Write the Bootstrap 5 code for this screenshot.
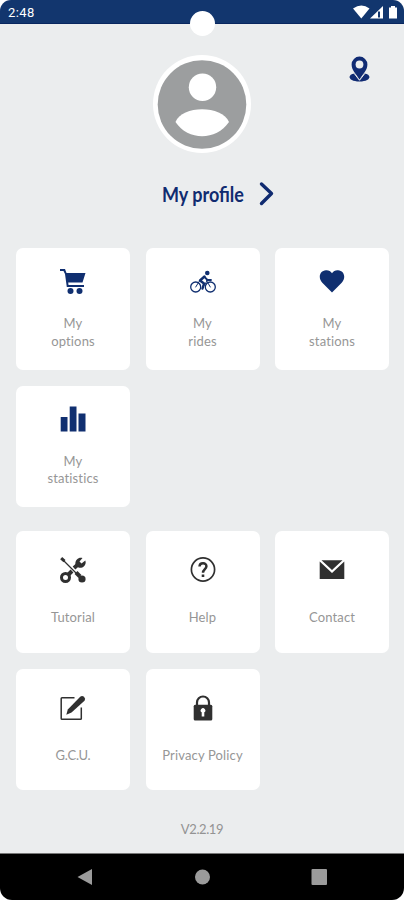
<!DOCTYPE html>
<html lang="en">
<head>
<meta charset="utf-8">
<meta name="viewport" content="width=device-width, initial-scale=1">
<title>My profile</title>
<link href="https://cdn.jsdelivr.net/npm/bootstrap@5.3.0/dist/css/bootstrap.min.css" rel="stylesheet">
<style>
:root{--navy:#12366e;--ink:#303030}
body{font-family:Lato,"Open Sans",sans-serif;background:#fff}
.phone{width:404px;height:900px;background:#ebedee;border-radius:11px 11px 12px 12px}
.status{height:24px;background:var(--navy);border-bottom:1px solid #08265f;padding:0 7px 0 8px}
.clock{font:400 13px/26px Roboto,sans-serif;letter-spacing:.4px}
.camera{width:25px;height:25px;left:190px;top:11px}
.locate{padding:31px 32px 0 0;height:31px;color:#102b73}
.avatar{width:98px;height:98px}
.profile{color:#102b70;height:30px;margin-top:26px;padding-left:32px;gap:14px}
.profile-name{font-size:20px;line-height:28px;font-weight:700;width:83px;white-space:nowrap}
.profile-name span{display:inline-block;transform:scaleX(.9);transform-origin:left}
.tiles{display:grid;grid-template-columns:repeat(3,114px);column-gap:15.5px;row-gap:16px;padding-left:16px}
.tiles.first{margin-top:39px}
.tiles.second{margin-top:24px}
.tile{height:121.5px;background:#fff;border-radius:7px;color:var(--ink);padding-top:26px}
.first .tile{color:#102f70;padding-top:20px}
.tile svg{width:26px;height:26px;flex:none}
.caption{font-size:13px;line-height:17.5px;color:#969696;letter-spacing:.15px;margin-top:26px}
.caption.abbr{letter-spacing:-.2px}
.first .caption{margin-top:21px}
.version{font-size:13px;line-height:18px;color:#939393;letter-spacing:-.4px;margin-top:29.5px}
.softkeys{height:47px;background:#000;border-top:1px solid #777}
</style>
</head>
<body>
<main class="phone position-relative overflow-hidden d-flex flex-column">
  <header class="status d-flex justify-content-between text-white flex-shrink-0">
    <span class="clock">2:48</span>
    <svg width="46" height="23" viewBox="351 0 46 23" fill="#fff"><path d="M353 8.500Q361.500 2.500 369.500 8.500L361.300 18.500Z"/><path d="M370 18.500 383 6V18.500Z"/><path d="M378 11.500h2v6h-2z" fill="#12366e"/><path d="M391 6h4v1.500h2V18.500h-8V7.500h2z"/></svg>
  </header>
  <div class="camera bg-white rounded-circle position-absolute"></div>
  <div class="locate d-flex justify-content-end flex-shrink-0">
    <svg width="24" height="28" viewBox="0 0 24 28" class="flex-shrink-0"><path d="M6.500 18.500C-1 19.500-.5 26.600 11.500 26.600S24 19.500 16.500 18.500L11.500 25Z" fill="currentColor"/><path d="M11.500 24.500C8 19 3.600 15 3.600 9.500a7.900 7.900 0 0 1 15.800 0C19.400 15 15 19 11.500 24.500Z" fill="currentColor"/><circle cx="11.500" cy="9.500" r="3.900" fill="#ebedee"/><path d="M6.200 18.500 11.500 25.300 16.800 18.500" fill="none" stroke="#ebedee"/></svg>
  </div>
  <svg class="avatar align-self-center flex-shrink-0" viewBox="0 0 98 98"><circle cx="49" cy="49" r="49" fill="#fff"/><circle cx="49" cy="49.500" r="44.300" fill="#9c9e9f"/><circle cx="49.500" cy="32.300" r="13.700" fill="#fff"/><path d="M22.500 67C29 50 69 50 76 67 63 86 35 86 22.500 67Z" fill="#fff"/></svg>
  <div class="profile d-flex justify-content-center align-items-center flex-shrink-0">
    <div class="profile-name"><span>My profile</span></div>
    <svg width="16" height="26" viewBox="0 0 16 26" fill="none" stroke="currentColor" stroke-width="3.400" stroke-linecap="round" stroke-linejoin="round"><path d="M2.500 3 12.500 12.500 2.500 22.500"/></svg>
  </div>

  <section class="tiles first">
    <div class="tile d-flex flex-column align-items-center text-center">
      <svg viewBox="0 0 26 26" fill="currentColor"><path d="M0 1H5L6.500 5H25.500L22.500 14.500H8.200L8.500 17H24V19H6.800L5 6 3.500 3H0Z"/><circle cx="10.500" cy="23" r="3"/><circle cx="19.500" cy="23" r="3"/></svg>
      <div class="caption">My<br>options</div>
    </div>
    <div class="tile d-flex flex-column align-items-center text-center">
      <svg viewBox="0 0 26 26" fill="none" stroke="currentColor" stroke-linecap="round" stroke-linejoin="round"><circle cx="5.700" cy="19" r="5" stroke-width="1.300"/><circle cx="20.300" cy="19" r="5" stroke-width="1.300"/><circle cx="17.300" cy="5" r="2.300" fill="currentColor" stroke="none"/><path d="M14.500 8.500 10 12.500 14 15.500 12.500 20.500" stroke-width="2.400"/><path d="M14.500 9 17.500 12H21" stroke-width="1.800"/><path d="M5.700 19 9.500 13M16.500 12.500 20.300 19M12.500 20 17 13" stroke-width="1"/></svg>
      <div class="caption">My<br>rides</div>
    </div>
    <div class="tile d-flex flex-column align-items-center text-center">
      <svg viewBox="0 0 26 26" fill="currentColor"><path d="M13 24.500 3.300 14.800C-1.200 10.200.5 2.500 7 2.200 9.500 2 11.700 3.100 13 5.200 14.300 3.100 16.500 2 19 2.200 25.500 2.500 27.200 10.200 22.700 14.800Z"/></svg>
      <div class="caption">My<br>stations</div>
    </div>
    <div class="tile d-flex flex-column align-items-center text-center">
      <svg viewBox="0 0 26 26" fill="currentColor"><path d="M.7 11H7.500V25.500H.7ZM9.700.5h6.800v25H9.700ZM18.500 7.500h7v18h-7Z"/></svg>
      <div class="caption">My<br>statistics</div>
    </div>
  </section>

  <section class="tiles second">
    <div class="tile d-flex flex-column align-items-center text-center">
      <svg viewBox="0 0 26 26" fill="none" stroke="currentColor"><path d="M1.200 1.200 4.500 4.200" stroke-width="3"/><path d="M4 4 17 17" stroke-width="1.200"/><path d="M16 15.500 20 19.500" stroke-width="4"/><circle cx="22" cy="22" r="3.600" fill="currentColor" stroke="none"/><circle cx="5.500" cy="20.500" r="4" stroke-width="3"/><path d="M8 18 12 14M14 11 18 7.500" stroke-width="4"/><path d="M22.500 1 19.500 4.500 21.500 6.500 25.300 3.500C27 8 22.500 12 18.500 10.500L15.500 8C14.500 3.500 18.500-.5 22.500 1Z" fill="currentColor" stroke="none"/></svg>
      <div class="caption">Tutorial</div>
    </div>
    <div class="tile d-flex flex-column align-items-center text-center">
      <svg viewBox="0 0 26 26" fill="none" stroke="currentColor"><circle cx="13" cy="12.500" r="11.600" stroke-width="1.700"/><path d="M9.500 9.500C9.800 5 16.700 5.500 16.400 9.500 16.200 12 13 12.300 13 15.800" stroke-width="2.500"/><path d="M11.700 17.500h2.600V20h-2.600z" fill="currentColor" stroke="none"/></svg>
      <div class="caption">Help</div>
    </div>
    <div class="tile d-flex flex-column align-items-center text-center">
      <svg viewBox="0 0 26 26" fill="currentColor"><path d="M2.500 3.300H23.500L13 13ZM.7 4.500 13 16 25.300 4.500V22H.7Z"/></svg>
      <div class="caption">Contact</div>
    </div>
    <div class="tile d-flex flex-column align-items-center text-center">
      <svg viewBox="0 0 26 26" fill="none" stroke="currentColor"><path d="M14.500 2.700H2Q1.200 2.700 1.200 3.500V23.500Q1.200 24.300 2 24.300H20.500Q21.300 24.300 21.300 23.500V12.500" stroke-width="1.500"/><path d="M20.200 1.800Q22 .2 24 1.800 26 3.600 24.500 5.700L11.500 17.500 6.300 19.800 7.800 14.500Z" fill="currentColor" stroke="none"/></svg>
      <div class="caption abbr">G.C.U.</div>
    </div>
    <div class="tile d-flex flex-column align-items-center text-center">
      <svg viewBox="0 0 26 26" fill="none" stroke="currentColor"><path d="M7 11V7.500a6 6 0 0 1 12 0V11" stroke-width="2.200"/><rect x="3.700" y="9.800" width="18.600" height="15.700" rx="1.500" fill="currentColor" stroke="none"/><path d="M11.700 21.500V17.300a2.300 2.300 0 1 1 2.600 0V21.500Z" fill="#fff" stroke="none"/></svg>
      <div class="caption">Privacy Policy</div>
    </div>
  </section>

  <div class="version text-center">V2.2.19</div>

  <footer class="softkeys mt-auto flex-shrink-0">
    <svg class="d-block" width="404" height="46" viewBox="0 854 404 46" fill="#9b9b9b"><path d="M77.500 877 92 869V885Z"/><circle cx="202.500" cy="877" r="7.500"/><rect x="311.500" y="869" width="15.500" height="16" rx="1"/></svg>
  </footer>
</main>
<script src="https://cdn.jsdelivr.net/npm/bootstrap@5.3.0/dist/js/bootstrap.bundle.min.js"></script>
</body>
</html>
